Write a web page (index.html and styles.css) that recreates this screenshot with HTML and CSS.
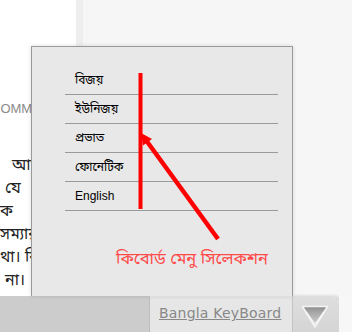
FILE: index.html
```html
<!DOCTYPE html>
<html>
<head>
<meta charset="utf-8">
<link rel="stylesheet" href="styles.css">
</head>
<body>
<div class="page">
  <div class="main">
    <div class="col-white">
      <div class="label">COMMENTS</div>
      <div class="para">
        <span class="ln ln-a">আমার</span>
        <span class="ln ln-b">যে</span>
        <span class="ln">ক</span>
        <span class="ln">সম্যার</span>
        <span class="ln">থা। বি</span>
        <span class="ln ln-b">না।</span>
      </div>
    </div>
    <div class="col-strip"></div>
    <div class="col-rest"></div>
  </div>
  <div class="bar">
    <div class="bar-left"></div>
    <div class="bar-panel"><a class="kb-link" href="#">Bangla KeyBoard</a></div>
    <div class="bar-btn">
      <svg class="tri" width="28" height="24" viewBox="0 0 28 24">
        <defs>
          <linearGradient id="tg" x1="0" y1="0" x2="0" y2="1">
            <stop offset="0" stop-color="#8c8c8c"/>
            <stop offset="0.3" stop-color="#a8a8a8"/>
            <stop offset="1" stop-color="#d6d6d6"/>
          </linearGradient>
        </defs>
        <polygon points="1.5,1.5 26.5,1.5 14,22" fill="url(#tg)" stroke="#f4f4f4" stroke-width="1.6" stroke-linejoin="round"/>
        <polyline points="5,6.5 14,19 23,6.5" fill="none" stroke="#ffffff" stroke-width="1.2" opacity="0.8"/>
      </svg>
    </div>
    <div class="bar-rest"></div>
  </div>
  <div class="popup">
    <ul class="menu">
      <li>বিজয়</li>
      <li>ইউনিজয়</li>
      <li>প্রভাত</li>
      <li>ফোনেটিক</li>
      <li class="en">English</li>
    </ul>
    <div class="note">কিবোর্ড মেনু সিলেকশন</div>
  </div>
  <svg class="annot" width="352" height="332" viewBox="0 0 352 332">
    <line x1="140.5" y1="73" x2="140.5" y2="209" stroke="#ff0000" stroke-width="4"/>
    <line x1="218" y1="239" x2="147" y2="141.5" stroke="#ff0000" stroke-width="4.5"/>
    <polygon points="141,133 152,139 143,145.5" fill="#ff0000"/>
  </svg>
</div>
</body>
</html>
```
FILE: styles.css
```css
html, body {
  margin: 0;
  padding: 0;
}
body {
  width: 352px;
  height: 332px;
  overflow: hidden;
  background: #f7f7f7;
  font-family: "Liberation Sans", "Noto Sans Bengali", "Lohit Bengali", "Noto Sans", sans-serif;
}
.page {
  position: relative;
  width: 352px;
  height: 332px;
  display: flex;
  flex-direction: column;
}
.main {
  height: 296px;
  display: flex;
}
.col-white {
  width: 76px;
  background: #ffffff;
  overflow: hidden;
  padding-top: 101px;
  box-sizing: border-box;
}
.col-strip {
  width: 7px;
  background: #eeeeee;
}
.col-rest {
  flex: 1;
  background: #f6f6f6;
}
.label {
  font-size: 13px;
  color: #8a8a8a;
  margin-left: -9px;
  line-height: 15px;
  white-space: nowrap;
}
.para {
  margin-top: 37px;
  font-size: 16px;
  line-height: 23px;
  color: #222;
}
.ln {
  display: block;
  white-space: nowrap;
}
.ln-a { padding-left: 12px; }
.ln-b { padding-left: 5px; }

.bar {
  height: 36px;
  display: flex;
}
.bar-left {
  width: 149px;
  background: #cccccc;
}
.bar-panel {
  width: 143px;
  background: #e6e6e6;
  border-left: 1px solid #bdbdbd;
  border-top: 1px solid #ececec;
  box-sizing: border-box;
  padding: 7px 0 0 9px;
}
.kb-link {
  font-family: "DejaVu Sans", sans-serif;
  font-size: 14px;
  letter-spacing: 0.2px;
  color: #888888;
  text-decoration: underline;
}
.bar-btn {
  width: 47px;
  background: linear-gradient(#dedede, #d5d5d5);
  border-top-right-radius: 7px;
  box-shadow: 2px 0 3px rgba(0,0,0,0.18);
  border-left: 1px solid #c4c4c4;
  box-sizing: border-box;
  padding: 9px 0 0 8px;
}
.tri {
  display: block;
}
.bar-rest {
  flex: 1;
  background: #f7f7f7;
}

.popup {
  position: absolute;
  left: 31px;
  top: 46px;
  width: 262px;
  height: 250px;
  box-sizing: border-box;
  background: #e8e8e8;
  border: 1px solid #9a9a9a;
  border-bottom: none;
  box-shadow: 0 0 4px rgba(0,0,0,0.14);
}
.menu {
  list-style: none;
  margin: 19px 14px 0 33px;
  padding: 0;
}
.menu li {
  height: 28px;
  line-height: 28px;
  border-bottom: 1px solid #9a9a9a;
  padding-left: 10px;
  font-size: 12px;
  color: #000;
}
.note {
  margin-top: 37px;
  padding-left: 84px;
  font-size: 16.5px;
  line-height: 20px;
  color: #ff4a4a;
  white-space: nowrap;
}
.annot {
  position: absolute;
  left: 0;
  top: 0;
  pointer-events: none;
}
```
